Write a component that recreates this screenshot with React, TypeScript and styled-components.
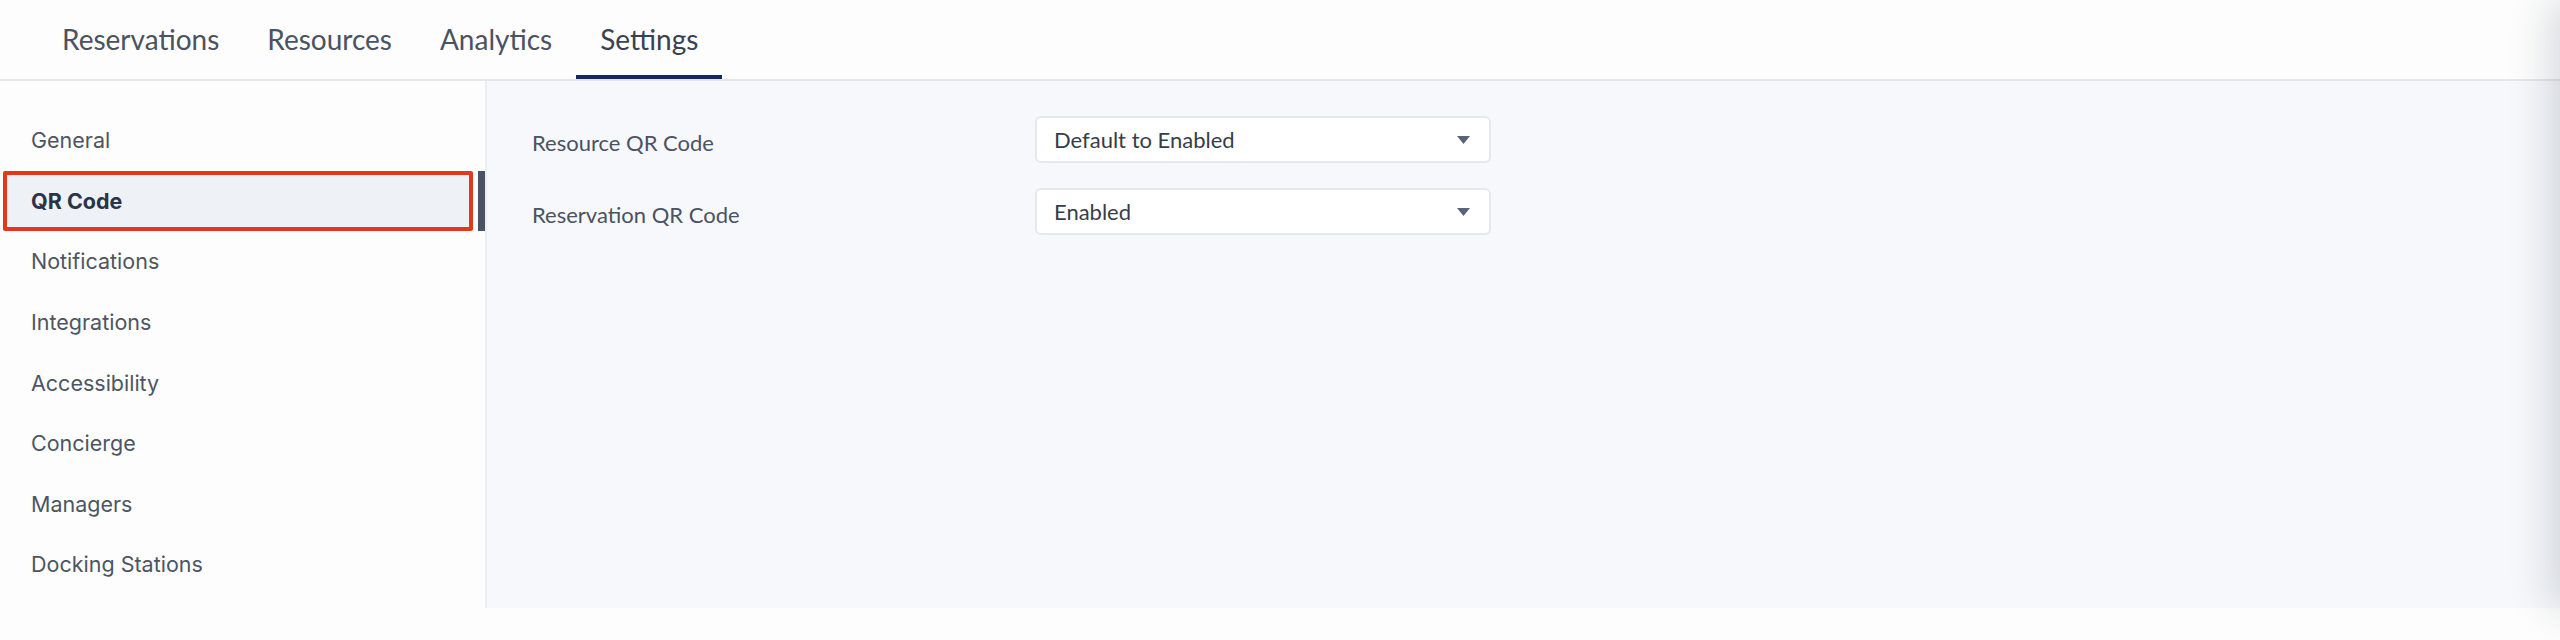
import React from "react";
import styled, { createGlobalStyle } from "styled-components";

const Global = createGlobalStyle`
  html, body { margin: 0; padding: 0; background: #fdfdfd; }
  body { width: 2560px; height: 640px; overflow: hidden; }
  * { box-sizing: border-box; }
`;

const Page = styled.div`
  width: 2560px;
  height: 640px;
  background: #fdfdfd;
  position: relative;
  overflow: hidden;
  font-family: Lato, "Liberation Sans", sans-serif;
`;

const Header = styled.nav`
  display: flex;
  height: 81px;
  padding-left: 38px;
  background: #fdfdfd;
  border-bottom: 2px solid #e4e6ea;
`;

const Tab = styled.div<{ $active?: boolean }>`
  display: flex;
  align-items: center;
  padding: 0 24px;
  height: 79px;
  font-size: 28px;
  color: ${(p) => (p.$active ? "#3a4150" : "#4b5260")};
  border-bottom: 4px solid ${(p) => (p.$active ? "#13295b" : "transparent")};
  padding-top: 2px;
`;

const Body = styled.div`
  display: flex;
  height: 527px;
`;

const Sidebar = styled.aside`
  width: 487px;
  flex-shrink: 0;
  background: #fdfdfd;
  border-right: 2px solid #eceef2;
  padding-top: 29px;
  font-family: Inter, "Noto Sans", sans-serif;
`;

const NavRow = styled.div`
  display: flex;
  align-items: stretch;
  height: 60.6px;
  padding-left: 3px;
  gap: 5px;
`;

const NavLabel = styled.div<{ $active?: boolean }>`
  flex: 1;
  display: flex;
  align-items: center;
  padding-left: 24px;
  font-size: 21.5px;
  font-weight: ${(p) => (p.$active ? 700 : 400)};
  color: ${(p) => (p.$active ? "#2b3445" : "#4d5562")};
  background: ${(p) => (p.$active ? "#eef1f5" : "transparent")};
  border: 4px solid ${(p) => (p.$active ? "#e2381c" : "transparent")};
  border-radius: 2px;
`;

const Marker = styled.div<{ $active?: boolean }>`
  width: 7px;
  background: ${(p) => (p.$active ? "#485366" : "transparent")};
`;

const Content = styled.main`
  flex: 1;
  background: #f6f8fb;
  padding: 35px 0 0 45px;
  display: grid;
  grid-template-columns: 503px 456px;
  grid-auto-rows: 47px;
  row-gap: 25px;
  align-content: start;
`;

const FieldLabel = styled.div`
  display: flex;
  align-items: center;
  padding-top: 5px;
  font-size: 22px;
  color: #4b5260;
`;

const Select = styled.div`
  display: flex;
  align-items: center;
  justify-content: space-between;
  background: #ffffff;
  border: 2px solid #e6e8ec;
  border-radius: 6px;
  padding: 0 19px 0 17px;
  font-size: 22px;
  color: #363d4a;
`;

const Drawer = styled.div`
  position: absolute;
  top: 0;
  left: 2560px;
  width: 400px;
  height: 608px;
  box-shadow: -8px 0 40px rgba(30, 40, 60, 0.18);
`;

const Caret = () => (
  <svg width="13" height="8" viewBox="0 0 13 8">
    <path d="M0 0 H13 L6.5 8 Z" fill="#5a6378" />
  </svg>
);

const tabs = ["Reservations", "Resources", "Analytics", "Settings"];
const items = [
  "General",
  "QR Code",
  "Notifications",
  "Integrations",
  "Accessibility",
  "Concierge",
  "Managers",
  "Docking Stations",
];
const fields = [
  { label: "Resource QR Code", value: "Default to Enabled" },
  { label: "Reservation QR Code", value: "Enabled" },
];

export default function App() {
  return (
    <Page>
      <Global />
      <Header>
        {tabs.map((t) => (
          <Tab key={t} $active={t === "Settings"}>
            {t}
          </Tab>
        ))}
      </Header>
      <Body>
        <Sidebar>
          {items.map((it) => (
            <NavRow key={it}>
              <NavLabel $active={it === "QR Code"}>{it}</NavLabel>
              <Marker $active={it === "QR Code"} />
            </NavRow>
          ))}
        </Sidebar>
        <Content>
          {fields.map((f) => (
            <React.Fragment key={f.label}>
              <FieldLabel>{f.label}</FieldLabel>
              <Select>
                <span>{f.value}</span>
                <Caret />
              </Select>
            </React.Fragment>
          ))}
        </Content>
      </Body>
      <Drawer />
    </Page>
  );
}
